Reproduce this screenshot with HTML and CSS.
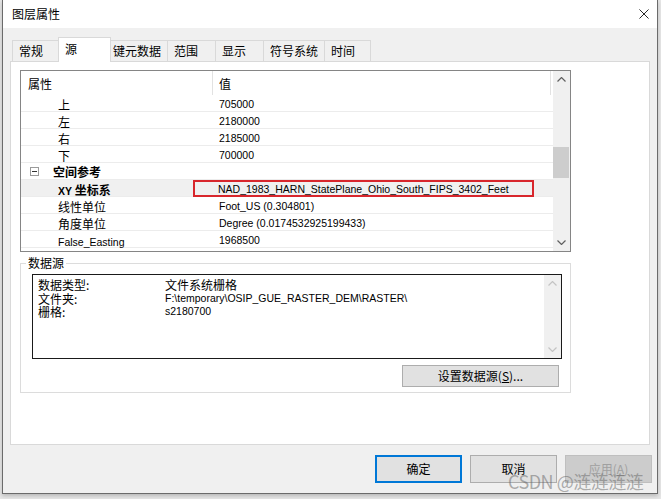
FILE: index.html
```html
<!DOCTYPE html>
<html lang="zh-CN">
<head>
<meta charset="utf-8">
<title>图层属性</title>
<link rel="stylesheet" href="styles.css">
</head>
<body>
<div class="window">
  <div class="titlebar">
    <span class="title">图层属性</span>
    <svg class="close" viewBox="0 0 11 11"><path d="M0.5 0.5 L10.5 10.5 M10.5 0.5 L0.5 10.5" stroke="#111" stroke-width="1" fill="none"/></svg>
  </div>
  <div class="client">
    <div class="tabs">
      <div class="tab w47">常规</div>
      <div class="tab active">源</div>
      <div class="tab w58 tight">键元数据</div>
      <div class="tab w49">范围</div>
      <div class="tab w49">显示</div>
      <div class="tab w62">符号系统</div>
      <div class="tab w47">时间</div>
    </div>
    <div class="panel">
      <div class="grid">
        <div class="list">
          <div class="head">
            <div class="h1">属性</div>
            <div class="h2">值</div>
          </div>
          <div class="row"><div class="c1 ind">上</div><div class="c2">705000</div></div>
          <div class="row"><div class="c1 ind">左</div><div class="c2">2180000</div></div>
          <div class="row"><div class="c1 ind">右</div><div class="c2">2185000</div></div>
          <div class="row"><div class="c1 ind">下</div><div class="c2">700000</div></div>
          <div class="row"><div class="c1 cat"><span class="minus"></span><b>空间参考</b></div><div class="c2"></div></div>
          <div class="row sel"><div class="c1 ind"><b><span class="lat">XY</span> 坐标系</b></div><div class="c2 sel2">NAD_1983_HARN_StatePlane_Ohio_South_FIPS_3402_Feet</div><div class="mark"></div></div>
          <div class="row"><div class="c1 ind">线性单位</div><div class="c2">Foot_US (0.304801)</div></div>
          <div class="row"><div class="c1 ind">角度单位</div><div class="c2">Degree (0.0174532925199433)</div></div>
          <div class="row"><div class="c1 ind"><span class="lat">False_Easting</span></div><div class="c2">1968500</div></div>
        </div>
        <div class="vscroll">
          <div class="arrow"><svg viewBox="0 0 9 5"><polyline points="0.5,4.5 4.5,0.5 8.5,4.5" fill="none" stroke="#606060" stroke-width="1.2"/></svg></div>
          <div class="track"><div class="thumb"></div></div>
          <div class="arrow"><svg viewBox="0 0 9 5"><polyline points="0.5,0.5 4.5,4.5 8.5,0.5" fill="none" stroke="#606060" stroke-width="1.2"/></svg></div>
        </div>
      </div>
      <fieldset class="group">
        <legend>数据源</legend>
        <div class="textbox">
          <div class="tb-content">
            <span>数据类型:</span><span>文件系统栅格</span>
            <span>文件夹:</span><span class="lat">F:\temporary\OSIP_GUE_RASTER_DEM\RASTER\</span>
            <span>栅格:</span><span class="lat">s2180700</span>
          </div>
          <div class="vscroll off">
            <div class="arrow"><svg viewBox="0 0 9 5"><polyline points="0.5,4.5 4.5,0.5 8.5,4.5" fill="none" stroke="#c4c4c4" stroke-width="1.2"/></svg></div>
            <div class="track"></div>
            <div class="arrow"><svg viewBox="0 0 9 5"><polyline points="0.5,0.5 4.5,4.5 8.5,0.5" fill="none" stroke="#c4c4c4" stroke-width="1.2"/></svg></div>
          </div>
        </div>
        <div class="btnrow"><button class="btn setsrc">设置数据源(<u>S</u>)...</button></div>
      </fieldset>
    </div>
    <div class="buttons">
      <button class="btn default">确定</button>
      <button class="btn">取消</button>
      <button class="btn disabled">应用(<u>A</u>)</button>
    </div>
  </div>
</div>
<div class="watermark">CSDN @涟涟涟涟</div>
</body>
</html>
```
FILE: styles.css
```css
* { box-sizing: border-box; }
html, body { margin: 0; padding: 0; }
body {
  width: 661px;
  height: 499px;
  overflow: hidden;
  position: relative;
  background: #e6e6e6;
  font-family: "Noto Sans CJK SC", "Liberation Sans", sans-serif;
  font-size: 12px;
  color: #000;
}
.lat {
  font-family: "Liberation Sans", "Noto Sans CJK SC", sans-serif;
  font-size: 10.5px;
}
.window {
  margin-left: 2px;
  width: 656px;
  height: 494px;
  border: 1px solid #6b6b6b;
  border-top: none;
  background: #f0f0f0;
  display: flex;
  flex-direction: column;
  box-shadow: 0 2px 4px rgba(0,0,0,0.2);
}
.titlebar {
  flex: none;
  height: 28px;
  background: #fff;
  display: flex;
  align-items: center;
  justify-content: space-between;
  padding: 0 8px 0 9px;
}
.title { line-height: 16px; }
.close { width: 10px; height: 10px; margin-top: -1px; }
.client {
  flex: 1;
  display: flex;
  flex-direction: column;
  padding: 9px 7px 0 7px;
}
.tabs {
  display: flex;
  align-items: flex-end;
  height: 24px;
  padding-left: 2px;
  position: relative;
  z-index: 1;
}
.tab {
  height: 21px;
  border: 1px solid #d9d9d9;
  border-bottom: none;
  margin-right: -1px;
  padding-left: 6px;
  line-height: 19px;
  background: #f0f0f0;
  white-space: nowrap;
}
.tab.tight { padding-left: 2px; }
.w47 { width: 47px; }
.w49 { width: 49px; }
.w58 { width: 58px; }
.w62 { width: 62px; }
.tab.active {
  width: 53px;
  height: 25px;
  margin-bottom: -1px;
  background: #fff;
  line-height: 21px;
  padding-left: 6px;
}
.panel {
  height: 384px;
  background: #fff;
  border: 1px solid #d9d9d9;
  padding: 8px 0 0 9px;
}
.grid {
  width: 551px;
  height: 182px;
  border: 1px solid #858585;
  display: flex;
}
.list {
  width: 532px;
  overflow: hidden;
}
.head {
  display: flex;
  width: 530px;
  height: 24px;
  line-height: 25px;
}
.h1 {
  width: 192px;
  padding-left: 7px;
  border-right: 1px solid #e2e2e2;
}
.h2 {
  flex: 1;
  padding-left: 6px;
  border-right: 1px solid #e2e2e2;
}
.row {
  position: relative;
  display: flex;
  height: 17px;
  line-height: 19px;
  border-bottom: 1px solid #ececec;
  white-space: nowrap;
}
.row.sel { background: #f0f0f0; }
.c1 { width: 192px; flex: none; }
.c1.ind { padding-left: 37px; }
.c1.cat { padding-left: 9px; display: flex; align-items: center; }
.c2 {
  flex: 1;
  padding-left: 6px;
  font-family: "Liberation Sans", "Noto Sans CJK SC", sans-serif;
  font-size: 10.5px;
}
.c2.sel2 { padding-left: 5px; }
.minus {
  width: 9px;
  height: 9px;
  border: 1px solid #9a9a9a;
  margin-right: 14px;
  position: relative;
  background: #fff;
}
.minus::after {
  content: "";
  position: absolute;
  left: 1px;
  top: 3px;
  width: 5px;
  height: 1px;
  background: #333;
}
.mark {
  position: absolute;
  left: 172px;
  top: 0;
  width: 341px;
  height: 17px;
  border: 2px solid #d8262c;
}
.vscroll {
  width: 17px;
  flex: none;
  background: #f0f0f0;
  display: flex;
  flex-direction: column;
}
.arrow {
  height: 17px;
  display: flex;
  align-items: center;
  justify-content: center;
}
.arrow svg { width: 9px; height: 5px; }
.track { flex: 1; }
.thumb {
  margin-top: 59px;
  width: 16px;
  height: 31px;
  background: #cdcdcd;
}
.group {
  width: 551px;
  margin: 3px 0 0 0;
  padding: 0 8px 5px 11px;
  border: 1px solid #dcdcdc;
  min-inline-size: 0;
}
.group legend {
  margin-left: -6px;
  padding: 0 2px;
  line-height: 16px;
}
.textbox {
  margin-top: 3px;
  height: 85px;
  border: 1px solid #1a1a1a;
  display: flex;
  background: #fff;
}
.tb-content {
  flex: 1;
  padding: 3px 0 0 5px;
  display: grid;
  grid-template-columns: 127px 1fr;
  grid-auto-rows: 13.5px;
  line-height: 13.5px;
  align-content: start;
}
.vscroll.off { background: #f0f0f0; }
.btnrow {
  display: flex;
  justify-content: flex-end;
  margin-top: 6px;
  padding-right: 3px;
}
.btn {
  font-family: "Noto Sans CJK SC", "Liberation Sans", sans-serif;
  font-size: 12px;
  color: #000;
  background: #e1e1e1;
  border: 1px solid #adadad;
  padding: 0;
  margin: 0;
  line-height: 16px;
}
.btn u { text-decoration: underline; }
.setsrc { width: 157px; height: 22px; }
.buttons {
  display: flex;
  justify-content: flex-end;
  gap: 8px;
  margin-top: 10px;
  margin-right: -2px;
}
.buttons .btn { width: 87px; height: 28px; }
.btn.default { border: 2px solid #0078d7; }
.btn.disabled { background: #cccccc; border-color: #bfbfbf; color: #a0a0a0; }
.watermark {
  position: absolute;
  left: 508px;
  top: 470px;
  font-size: 18px;
  line-height: 22px;
  color: rgba(100,100,100,0.5);
  white-space: nowrap;
  letter-spacing: -0.5px;
}
```
